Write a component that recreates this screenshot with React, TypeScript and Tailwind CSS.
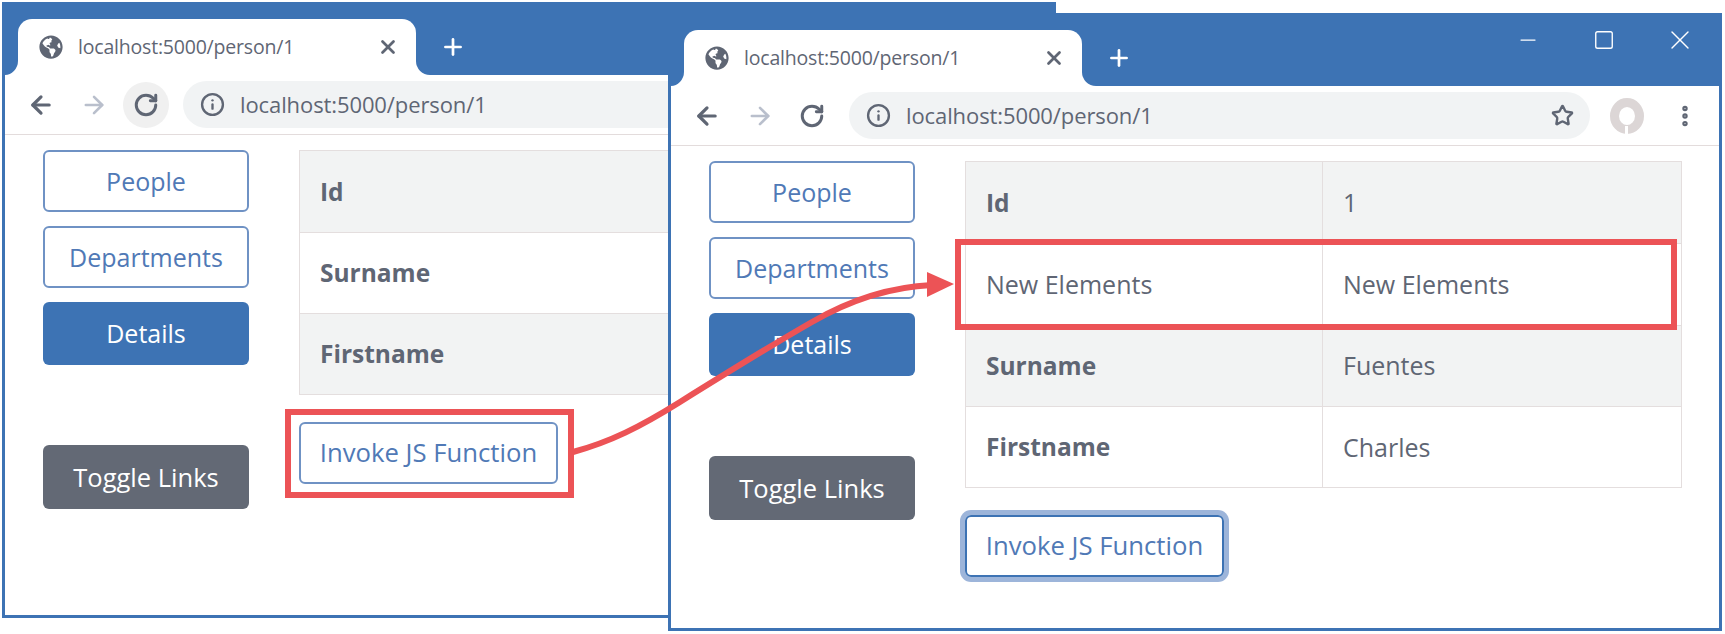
import { ArrowLeft, ArrowRight, Info, Minus, MoreVertical, Plus, RotateCw, Square, Star, X } from "lucide-react";
import { FaGlobeAmericas } from "react-icons/fa";

type Row = { label: string; value?: string; bold?: boolean; striped?: boolean };

// the value column of the back window sits under the front one
const leftRows: Row[] = [
  { label: "Id", bold: true, striped: true },
  { label: "Surname", bold: true },
  { label: "Firstname", bold: true, striped: true },
];

const rightRows: Row[] = [
  { label: "Id", value: "1", bold: true, striped: true },
  { label: "New Elements", value: "New Elements" },
  { label: "Surname", value: "Fuentes", bold: true, striped: true },
  { label: "Firstname", value: "Charles", bold: true },
];

function TabFlare({ side }: { side: "left" | "right" }) {
  return (
    <div className={side === "left" ? "absolute bottom-0 left-[-14px] w-[14px] h-[14px] bg-white" : "absolute bottom-0 right-[-14px] w-[14px] h-[14px] bg-white"}>
      <div className={side === "left" ? "w-full h-full bg-[#3d73b4] rounded-br-[14px]" : "w-full h-full bg-[#3d73b4] rounded-bl-[14px]"} />
    </div>
  );
}

function BrowserWindow({ rows, focused, className }: { rows: Row[]; focused: boolean; className: string }) {
  return (
    <div className={`absolute w-[1054px] flex flex-col bg-white border-x-[3px] border-b-[3px] border-[#3d73b4] overflow-hidden ${className}`}>
      {/* Title bar */}
      <div className="h-[73px] bg-[#3d73b4] flex items-end pl-[13px] shrink-0">
        <div className="relative w-[398px] h-[56px] bg-white rounded-t-[14px] flex items-center pl-[21px] pr-[17px] text-[#5f6674]">
          <TabFlare side="left" />
          <TabFlare side="right" />
          <FaGlobeAmericas className="w-[24px] h-[24px] text-[#5f6674] shrink-0" />
          <span className="ml-[15px] text-[19.5px] tracking-[-0.2px]">localhost:5000/person/1</span>
          <X className="ml-auto w-[22px] h-[22px]" strokeWidth={3} />
        </div>
        <div className="ml-[24px] mb-[15px] text-white">
          <Plus className="w-[26px] h-[26px]" strokeWidth={2.5} />
        </div>
        <div className="ml-auto self-start mt-[15px] flex items-center pr-[1px] text-white">
          <div className="w-[76px] h-[24px] flex items-center justify-center">
            <Minus className="w-[24px] h-[24px]" strokeWidth={1.25} />
          </div>
          <div className="w-[76px] h-[24px] flex items-center justify-center">
            <Square className="w-[22px] h-[22px]" strokeWidth={1.5} />
          </div>
          <div className="w-[76px] h-[24px] flex items-center justify-center">
            <X className="w-[32px] h-[32px] shrink-0" strokeWidth={1} />
          </div>
        </div>
      </div>

      {/* Toolbar */}
      <div className="h-[60px] flex items-center pl-[22px] pr-[21px] border-b border-[#e3dcdc] shrink-0 text-[#5f6674]">
        <ArrowLeft className="w-[28px] h-[28px]" strokeWidth={2.75} />
        <ArrowRight className="ml-[25px] w-[28px] h-[28px] text-[#b9bfcc]" strokeWidth={2.25} />
        <div className={focused ? "ml-[15px] w-[46px] h-[46px] rounded-full bg-[#f0f0f0] flex items-center justify-center" : "ml-[15px] w-[46px] h-[46px] rounded-full flex items-center justify-center"}>
          <RotateCw className="w-[26px] h-[26px]" strokeWidth={2.75} />
        </div>
        <div className="ml-[14px] w-[741px] h-[47px] rounded-full bg-[#f1f3f4] flex items-center pl-[17px] pr-[16px]">
          <Info className="w-[25px] h-[25px]" strokeWidth={2.25} />
          <span className="ml-[15px] text-[22px] tracking-[-0.1px]">localhost:5000/person/1</span>
          <Star className="ml-auto w-[23px] h-[23px]" strokeWidth={2.5} />
        </div>
        <svg viewBox="0 0 36 36" className="ml-[19px] w-[36px] h-[36px]" fill="none">
          <ellipse cx="18" cy="18" rx="12.5" ry="13.5" stroke="#dcd6d6" strokeWidth="9" />
          <path d="M16 36V28h3v8z" fill="#fff" />
        </svg>
        <MoreVertical className="ml-auto w-[26px] h-[26px]" strokeWidth={3} />
      </div>

      {/* Page */}
      <div className="flex pl-[38px] pt-[15px]">
        <div className="w-[206px] flex flex-col gap-[14px] text-[25px] shrink-0">
          <div className="h-[62px] pt-[1px] rounded-[6px] border-2 border-[#6f92c4] text-[#5079b6] flex items-center justify-center">People</div>
          <div className="h-[62px] pt-[1px] rounded-[6px] border-2 border-[#6f92c4] text-[#5079b6] flex items-center justify-center">Departments</div>
          <div className="h-[63px] pt-[1px] rounded-[6px] bg-[#3d73b4] text-white flex items-center justify-center">Details</div>
          <div className="h-[64px] mt-[66px] rounded-[6px] bg-[#636975] text-white flex items-center justify-center text-[25.5px]">Toggle Links</div>
        </div>
        <div className="ml-[50px] w-[717px] shrink-0">
          <div className="border border-[#e4dede] text-[25px] text-[#5f6674]">
            {rows.map((row, i) => (
              <div key={row.label} className={`flex ${focused ? "h-[81px]" : "h-[81.25px]"} items-center ${i > 0 ? "border-t border-[#e4dede]" : ""} ${row.striped ? "bg-[#f2f3f3]" : ""}`}>
                <div className={`${focused ? "w-[420px]" : "w-[357px]"} h-full flex items-center pl-[20px] pt-[1px] border-r border-[#e4dede] ${row.bold ? "font-bold text-[24.5px]" : ""}`}>{row.label}</div>
                <div className="flex-1 pl-[20px] pt-[1px]">{row.value}</div>
              </div>
            ))}
          </div>
          <div className={focused ? "mt-[27px] w-[259px] h-[62px] rounded-[6px] border-2 border-[#6f92c4] text-[25.7px] text-[#5079b6] flex items-center justify-center" : "mt-[27px] w-[259px] h-[62px] rounded-[6px] border-2 border-[#3d73b4] ring-[5px] ring-[#9db5da] text-[25.7px] text-[#5079b6] flex items-center justify-center"}>
            Invoke JS Function
          </div>
        </div>
      </div>
    </div>
  );
}

export default function App() {
  return (
    <div className="relative w-[1725px] h-[634px] bg-white overflow-hidden font-['Open_Sans',sans-serif]">
      <BrowserWindow rows={leftRows} focused className="left-[2px] top-[2px] h-[616px]" />
      <BrowserWindow rows={rightRows} focused={false} className="left-[668px] top-[13px] h-[618px]" />

      {/* Callouts */}
      <div className="absolute left-[285px] top-[409px] w-[289px] h-[89px] border-[6px] border-[#ec5356]" />
      <div className="absolute left-[955px] top-[239px] w-[722px] h-[91px] border-[6px] border-[#ec5356]" />
      <svg className="absolute left-0 top-0 w-[1725px] h-[634px] pointer-events-none" viewBox="0 0 1725 634" fill="none">
        <path d="M573 452C610 442 640 427 680 402C725 374 770 346 812 322C850 300 890 287 932 285" stroke="#ec5356" strokeWidth="6" />
        <path d="M954 284L927 272V297Z" fill="#ec5356" />
      </svg>
    </div>
  );
}
